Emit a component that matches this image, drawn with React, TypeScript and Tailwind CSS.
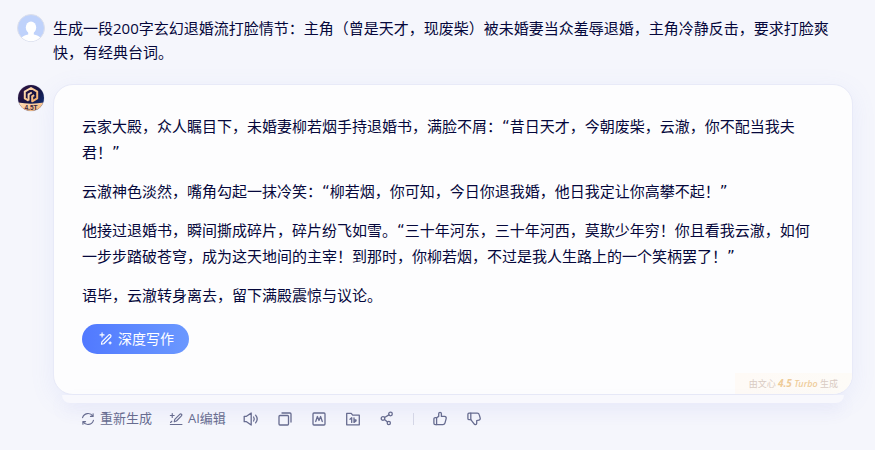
import type { ReactNode } from 'react'

const question =
  '生成一段200字玄幻退婚流打脸情节：主角（曾是天才，现废柴）被未婚妻当众羞辱退婚，主角冷静反击，要求打脸爽快，有经典台词。'

const paragraphs = [
  '云家大殿，众人瞩目下，未婚妻柳若烟手持退婚书，满脸不屑：“昔日天才，今朝废柴，云澈，你不配当我夫君！”',
  '云澈神色淡然，嘴角勾起一抹冷笑：“柳若烟，你可知，今日你退我婚，他日我定让你高攀不起！”',
  '他接过退婚书，瞬间撕成碎片，碎片纷飞如雪。“三十年河东，三十年河西，莫欺少年穷！你且看我云澈，如何一步步踏破苍穹，成为这天地间的主宰！到那时，你柳若烟，不过是我人生路上的一个笑柄罢了！”',
  '语毕，云澈转身离去，留下满殿震惊与议论。',
]

function Icon({ children, className = 'size-4' }: { children: ReactNode; className?: string }) {
  return (
    <svg
      viewBox="0 0 16 16"
      fill="none"
      stroke="currentColor"
      strokeWidth="1.3"
      strokeLinecap="round"
      strokeLinejoin="round"
      aria-hidden="true"
      className={`shrink-0 ${className}`}
    >
      {children}
    </svg>
  )
}

function UserAvatar() {
  return (
    <svg viewBox="0 0 28 28" className="size-7 shrink-0" aria-hidden="true">
      <defs>
        <clipPath id="user-clip">
          <circle cx="14" cy="14" r="13.2" />
        </clipPath>
      </defs>
      <circle cx="14" cy="14" r="13.5" fill="#bfd2fb" stroke="#dcdfeb" />
      <g clipPath="url(#user-clip)" fill="#fff">
        <ellipse cx="14" cy="13.5" rx="5.2" ry="6" />
        <path d="M11.2 17h5.6v3.6c3 .8 5.4 1.6 7 3.4V28H4.2v-4c1.6-1.8 4-2.6 7-3.4z" />
      </g>
    </svg>
  )
}

function BotAvatar() {
  return (
    <svg viewBox="0 0 28 28" className="size-7 shrink-0" aria-hidden="true">
      <defs>
        <clipPath id="bot-clip">
          <circle cx="14" cy="14" r="13" />
        </clipPath>
        <linearGradient id="bot-night" x1="0" y1="0" x2="1" y2="1">
          <stop offset="0" stopColor="#35133f" />
          <stop offset="0.5" stopColor="#151443" />
          <stop offset="1" stopColor="#123a86" />
        </linearGradient>
        <linearGradient id="bot-gold" x1="0" y1="0" x2="1" y2="1">
          <stop offset="0" stopColor="#fde0bd" />
          <stop offset="1" stopColor="#f6ad68" />
        </linearGradient>
      </defs>
      <circle cx="14" cy="14" r="13.5" fill="#dcdfeb" />
      <g clipPath="url(#bot-clip)">
        <rect width="28" height="28" fill="url(#bot-night)" />
        <path d="M0 18.4Q14 21 28 18.4V28H0z" fill="url(#bot-gold)" />
      </g>
      <g fill="none" stroke="url(#bot-gold)" strokeWidth="2" strokeLinejoin="round">
        <path d="M11.6 16.6 7.8 14.4V7.6L14 4l6.2 3.6v6.8l-5 2.9v-5l2-1.2" />
        <path d="M11.6 16.6V10.4L14.8 8.5" />
      </g>
      <text
        x="14"
        y="25.5"
        textAnchor="middle"
        fill="#3a2440"
        fontSize="6.5"
        fontWeight="700"
        fontFamily="'Liberation Sans', sans-serif"
      >
        4.5T
      </text>
    </svg>
  )
}

const actions = [
  {
    label: '朗读',
    icon: (
      <>
        <path d="M1.2 5.3h2.3L8.2 2v12l-4.7-3.3H1.2z" />
        <path d="M10.6 6q1.4 2 0 4" />
        <path d="M12.6 4.2q3.2 3.8 0 7.6" />
      </>
    ),
  },
  {
    label: '复制',
    icon: (
      <>
        <rect x="2" y="4.5" width="9.5" height="9.5" rx="1" />
        <path d="M5 2h8a1 1 0 0 1 1 1v8" />
      </>
    ),
  },
  {
    label: 'Markdown',
    icon: (
      <>
        <rect x="2" y="2" width="12" height="12" rx="1" />
        <path d="M4.7 10.5 6.4 5.5l1.6 4 1.6-4 1.7 5" />
      </>
    ),
  },
  {
    label: '收藏',
    icon: (
      <>
        <path d="M1.7 13.8V2.4h4.5l1.5 1.8h6.6v9.6z" />
        <path d="M5 8.3 6.7 6.8v4.6M9 6.8v4.6l2.2-1.6M9 9h2" />
      </>
    ),
  },
  {
    label: '分享',
    icon: (
      <>
        <circle cx="11.5" cy="3" r="1.8" />
        <circle cx="4" cy="7.500" r="1.8" />
        <circle cx="9.800" cy="12" r="1.600" />
        <path d="M5.600 6.500 9.900 3.900M5.500 8.600l3 2.400" />
      </>
    ),
  },
]

export default function App() {
  return (
    <main className="min-h-screen bg-[#f5f6fc] pt-[14px] pr-[22px] pb-4 pl-[17px] font-['Open_Sans','Noto_Sans_CJK_SC',sans-serif] text-[15px] text-[#05073b]">
      <div className="flex items-start gap-2">
        <UserAvatar />
        <p className="min-w-0 flex-1 pt-[2px] leading-6">{question}</p>
      </div>

      <div className="mt-5 flex items-start gap-2">
        <BotAvatar />
        <div className="min-w-0 flex-1">
          <article className="relative overflow-hidden rounded-[20px] border border-[#e8eaf8] bg-[#fdfdfe] px-7 pt-[29px] pb-10 shadow-[0_6px_24px_rgba(120,140,240,0.1)]">
            <div className="space-y-[13px] font-['DejaVu_Sans','Noto_Sans_CJK_SC',sans-serif] leading-[26px]">
              {paragraphs.map(text => (
                <p key={text}>{text}</p>
              ))}
            </div>
            <button
              type="button"
              className="mt-[15px] flex h-[30px] items-center gap-[5px] rounded-full bg-linear-to-r from-[#5179ff] to-[#6b98ff] pr-[15px] pl-[17px] text-sm text-white"
            >
              <Icon className="size-[14px]">
                <path d="m3.3 11.2 8-8a1.6 1.6 0 0 1 2.2 2.2l-8 8-2.7.5z" />
                <path d="M3.5 1v4.6M1.2 3.3h4.6M12.7 11.3v2.4M11.5 12.5h2.4" />
              </Icon>
              深度写作
            </button>
            <div className="absolute right-0 bottom-0 bg-linear-to-r from-[#fefaf6] to-[#fdfbf7] px-[14px] font-['Noto_Sans','Noto_Sans_CJK_SC',sans-serif] text-[9px] leading-5 text-[#d9cbc3]">
              由文心 <b className="text-[10px] text-[#eecb97] italic">4.5</b>{' '}
              <span className="font-medium text-[#eecb97] italic">Turbo</span> 生成
            </div>
          </article>
          <div className="relative mx-[9px] h-2 rounded-b-[10px] bg-[#f8f8fd] shadow-[0_8px_16px_rgba(130,130,220,0.1)]" />

          <div className="relative mt-2 flex h-4 items-center pl-7 text-[13px] text-[#676c90]">
            <button type="button" className="flex items-center gap-[5px]">
              <Icon className="size-[14px]">
                <path d="M1.8 6.5A6.5 6.5 0 0 1 13.5 4.7M14.2 9.5A6.5 6.5 0 0 1 2.5 11.3" />
                <path d="M13.8 2v3h-3M2.2 14v-3h3" />
              </Icon>
              重新生成
            </button>
            <button type="button" className="ml-[17px] flex items-center gap-[5px]">
              <Icon className="size-[14px]">
                <path d="m6 11.2.6-2.8L12.3 2.6a1.3 1.3 0 0 1 1.9 1.9L8.5 10.3zM1.5 14.3h13.3" />
                <path d="M3.7 1.8v4.4M1.5 4h4.4" />
                <path d="m1.8 12 1.4-1.4" />
              </Icon>
              AI编辑
            </button>
            <div className="ml-[17px] flex items-center gap-[18px]">
              {actions.map(action => (
                <button key={action.label} type="button" aria-label={action.label}>
                  <Icon>{action.icon}</Icon>
                </button>
              ))}
              <span className="h-3 w-px bg-[#d4d6e6]" />
              <button type="button" aria-label="赞">
                <Icon>
                  <path d="M4.6 6.7H3.2A1.3 1.3 0 0 0 1.900 8v4.300a1.300 1.300 0 0 0 1.300 1.300h1.400z" />
                  <path d="M4.6 6.7 6.7 5.4V2.700a1.300 1.300 0 0 1 2.700 0v2.700h3.200a1.600 1.600 0 0 1 1.600 2l-1.100 4.300a2.200 2.200 0 0 1-2.100 1.900h-6.400" />
                </Icon>
              </button>
              <button type="button" aria-label="踩">
                <Icon>
                  <path d="M4.800 2.200H3A1.200 1.200 0 0 0 1.900 3.400v4a1.300 1.300 0 0 0 1.300 1.300h1.600z" />
                  <path d="M4.800 2.200h6.400a2.200 2.200 0 0 1 2.100 1.700l.9 3.300a1.500 1.500 0 0 1-1.300 1.900l-2.200.5v2.800a1.400 1.400 0 0 1-2.600.5L4.800 8.700" />
                </Icon>
              </button>
            </div>
          </div>
        </div>
      </div>
    </main>
  )
}
